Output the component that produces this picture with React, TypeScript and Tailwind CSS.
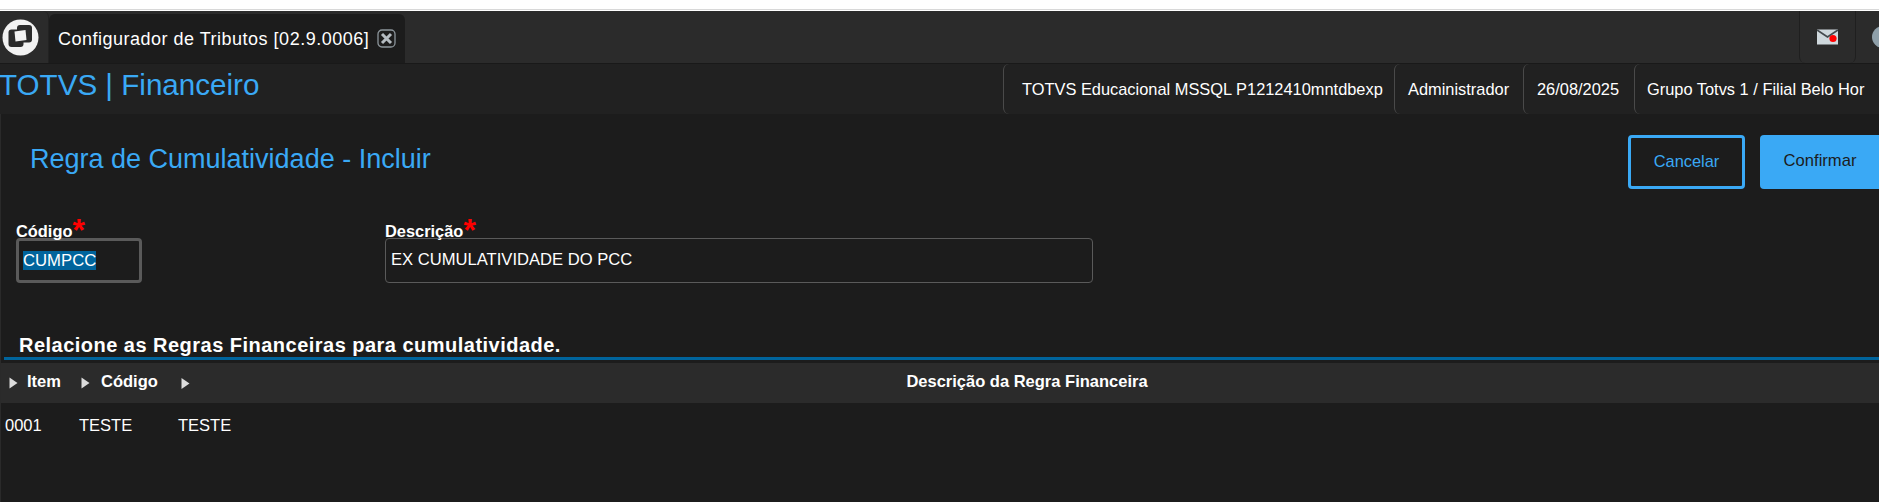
const font = { fontFamily: '"Liberation Sans", Arial, sans-serif' };

function Logo() {
  return (
    <svg width="37" height="37" viewBox="0 0 37 37">
      <circle cx="18.5" cy="18.5" r="18" fill="#f2f2f2" />
      <rect x="6.5" y="10.5" width="15" height="17.5" rx="3" fill="#2b2b2b" />
      <rect x="15" y="6" width="15" height="17.5" rx="3" fill="#2b2b2b" />
      <path d="M12.5 12.5 L23.5 11 L24.5 21 L13.5 22.5 Z" fill="#f2f2f2" />
    </svg>
  );
}

function CloseIcon() {
  return (
    <svg width="19" height="19" viewBox="0 0 19 19">
      <rect x="1" y="1" width="17" height="17" rx="4" fill="none" stroke="#8d969c" strokeWidth="1.3" />
      <path d="M5 5 L14 14 M14 5 L5 14" stroke="#b5bcc1" strokeWidth="3" />
    </svg>
  );
}

function MailIcon() {
  return (
    <svg width="21" height="16" viewBox="0 0 21 16">
      <rect width="21" height="15" y="0.5" fill="#cfd8dd" />
      <path d="M0 1 L10.5 8 L21 1" fill="none" stroke="#444a4e" strokeWidth="1.8" />
      <circle cx="16" cy="9.5" r="3.6" fill="#ff0000" />
    </svg>
  );
}

function SortArrow() {
  return (
    <svg width="9" height="12" viewBox="0 0 9 12" className="mt-[3px] shrink-0">
      <path d="M0.5 0.5 L8.5 6 L0.5 11.5 Z" fill="#dcdcdc" />
    </svg>
  );
}

export default function App() {
  return (
    <div className="h-[502px] w-[1879px] overflow-hidden bg-white text-white" style={font}>
      <div className="box-content h-[9px] border-b border-[#d8d8d8]" />
      <div className="h-px bg-white" />

      <div className="flex h-[53px] border-b border-[#191919] bg-[#2b2b2b]">
        <div className="flex w-[49px] items-center rounded-tr-md border-r border-[#222] pl-[2px]">
          <Logo />
        </div>
        <div className="mt-[3px] flex w-[356px] items-center gap-[8px] rounded-t-md bg-[#1c1c1c] pl-[9px] text-[18px] tracking-[0.5px]">
          <span className="whitespace-nowrap pt-[1px]">Configurador de Tributos [02.9.0006]</span>
          <CloseIcon />
        </div>
        <div className="ml-auto flex h-full">
          <div className="flex w-[57px] items-center justify-center rounded-b-md border-x border-[#1f1f1f]">
            <MailIcon />
          </div>
          <div className="flex w-[23px] items-center pl-[16px]">
            <div className="h-[22px] w-[22px] shrink-0 rounded-full bg-[#8fa0aa]" />
          </div>
        </div>
      </div>

      <div className="flex h-[50px] items-stretch justify-between bg-[#212121]">
        <div className="-ml-[1px] pt-[5px] text-[29.6px] leading-[32px] text-[#3aa9f5]">TOTVS | Financeiro</div>
        <div className="flex whitespace-nowrap text-[16.4px]">
          <div className="flex h-full w-[391px] items-center rounded-l-md border-l border-[#4a4a4a] pl-[18px]">
            TOTVS Educacional MSSQL P1212410mntdbexp
          </div>
          <div className="flex h-full w-[129px] items-center rounded-l-md border-l border-[#4a4a4a] pl-[13px]">
            Administrador
          </div>
          <div className="flex h-full w-[111px] items-center rounded-l-md border-l border-[#4a4a4a] pl-[13px]">
            26/08/2025
          </div>
          <div className="flex h-full w-[245px] items-center rounded-l-md border-l border-[#4a4a4a] pl-[12px]">
            Grupo Totvs 1 / Filial Belo Hor
          </div>
        </div>
      </div>

      <div className="h-[388px] border-l border-[#2a2a2a] bg-[#1c1c1c]">
        <div className="flex items-start justify-between pt-[21px] pl-[29px]">
          <h1 className="pt-[9px] text-[27px] leading-[30px] text-[#3aa9f5]">Regra de Cumulatividade - Incluir</h1>
          <div className="flex w-[251px] shrink-0 gap-[15px]">
            <button className="flex h-[54px] w-[117px] shrink-0 items-center justify-center rounded-[4px] border-[3px] border-[#3aa9f5] pb-[1px] text-[16.4px] text-[#3aa9f5]">
              Cancelar
            </button>
            <button className="flex h-[54px] w-[120px] shrink-0 items-center justify-center rounded-l-[4px] bg-[#3aa9f5] pb-[1px] text-[16.6px] text-[#1c1c1c]">
              Confirmar
            </button>
          </div>
        </div>

        <div className="mt-[33px] flex pl-[15px]">
          <div className="w-[369px]">
            <label className="flex h-[16px] items-start text-[16.4px] font-bold leading-[18px]">
              Código<span className="-mt-[6px] text-[32px] leading-[28px] font-bold text-[#ff0000]">*</span>
            </label>
            <div className="flex h-[45px] w-[126px] items-center rounded-[4px] border-[3px] border-[#5a5a5a] pl-[4px] text-[16.7px]">
              <span className="bg-[#00649c] leading-[19px]">CUMPCC</span>
            </div>
          </div>
          <div>
            <label className="flex h-[16px] items-start text-[16.4px] font-bold leading-[18px]">
              Descrição<span className="-mt-[6px] text-[32px] leading-[28px] font-bold text-[#ff0000]">*</span>
            </label>
            <div className="flex h-[45px] w-[708px] items-center rounded-[4px] border border-[#5a5a5a] pl-[5px] text-[16.6px]">
              EX CUMULATIVIDADE DO PCC
            </div>
          </div>
        </div>

        <h2 className="mt-[51px] pl-[18px] text-[20px] font-bold leading-[22px] tracking-[0.48px]">
          Relacione as Regras Financeiras para cumulatividade.
        </h2>
        <div className="mt-[1px] ml-[3px] h-[3px] bg-[#00649c]" />

        <div className="mt-[3px] grid h-[40px] grid-cols-[74px_100px_1fr] items-center bg-[#2b2b2b] pb-[3px] text-[16.5px] font-bold">
          <div className="flex items-center gap-[9px] pl-[8px]">
            <SortArrow />
            Item
          </div>
          <div className="flex items-center gap-[11px] pl-[6px]">
            <SortArrow />
            Código
          </div>
          <div className="relative flex items-center justify-center">
            <span className="absolute left-[6px] top-1/2 flex -translate-y-1/2">
              <SortArrow />
            </span>
            Descrição da Regra Financeira
          </div>
        </div>

        <div className="grid grid-cols-[74px_100px_1fr] pt-[13px] text-[16.5px] leading-[18px]">
          <div className="pl-[4px]">0001</div>
          <div className="pl-[4px]">TESTE</div>
          <div className="pl-[3px]">TESTE</div>
        </div>
      </div>
    </div>
  );
}
